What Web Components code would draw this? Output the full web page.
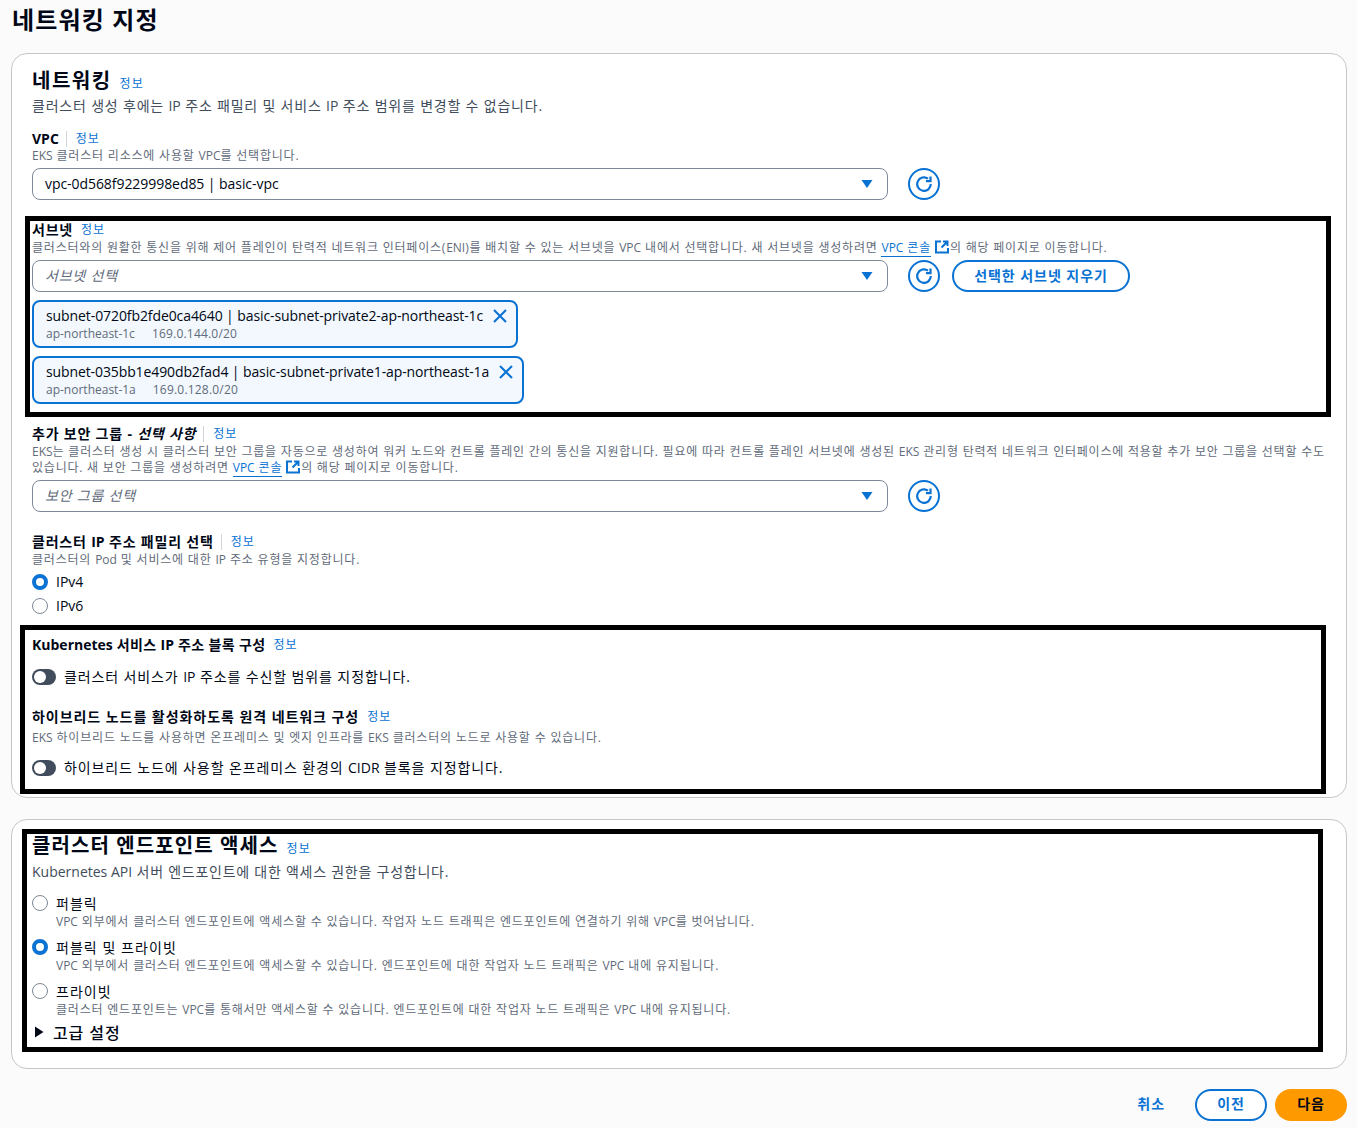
<!DOCTYPE html>
<html lang="ko"><head><meta charset="utf-8"><title>네트워킹 지정</title>
<style>
html,body{margin:0;padding:0;background:#fbfbfc}
body{font:14px/20px "Open Sans","Noto Sans CJK KR",sans-serif;color:#000716;letter-spacing:.8px}
</style></head><body>
<page-shell>
  <page-title>네트워킹 지정</page-title>
  <aws-card style="margin-top:19px;--pt:12px;--pb:19px">
    <card-head style="letter-spacing:1.5px">네트워킹</card-head>
    <aws-text style="margin-top:1px">클러스터 생성 후에는 IP 주소 패밀리 및 서비스 IP 주소 범위를 변경할 수 없습니다.</aws-text>

    <aws-label divider style="margin-top:13px">VPC</aws-label>
    <aws-desc style="margin-top:-1px">EKS 클러스터 리소스에 사용할 VPC를 선택합니다.</aws-desc>
    <select-row style="margin-top:5px"><aws-select>vpc-0d568f9229998ed85 | basic-vpc</aws-select><refresh-btn></refresh-btn></select-row>

    <aws-label style="margin-top:19px">서브넷</aws-label>
    <aws-desc style="letter-spacing:.79px">클러스터와의 원활한 통신을 위해 제어 플레인이 탄력적 네트워크 인터페이스(ENI)를 배치할 수 있는 서브넷을 VPC 내에서 선택합니다. 새 서브넷을 생성하려면 <ext-link>VPC 콘솔</ext-link>의 해당 페이지로 이동합니다.</aws-desc>
    <select-row style="margin-top:5px"><aws-select placeholder>서브넷 선택</aws-select><refresh-btn></refresh-btn><pill-btn style="margin-left:12px;width:178px">선택한 서브넷 지우기</pill-btn></select-row>
    <subnet-token style="margin-top:8px" az="ap-northeast-1c" cidr="169.0.144.0/20">subnet-0720fb2fde0ca4640 | basic-subnet-private2-ap-northeast-1c</subnet-token>
    <subnet-token style="margin-top:8px;--lr:-.11px" az="ap-northeast-1a" cidr="169.0.128.0/20">subnet-035bb1e490db2fad4 | basic-subnet-private1-ap-northeast-1a</subnet-token>

    <aws-label divider style="margin-top:19px">추가 보안 그룹 - <i>선택 사항</i></aws-label>
    <aws-desc style="letter-spacing:.78px">EKS는 클러스터 생성 시 클러스터 보안 그룹을 자동으로 생성하여 워커 노드와 컨트롤 플레인 간의 통신을 지원합니다. 필요에 따라 컨트롤 플레인 서브넷에 생성된 EKS 관리형 탄력적 네트워크 인터페이스에 적용할 추가 보안 그룹을 선택할 수도 있습니다. 새 보안 그룹을 생성하려면 <ext-link>VPC 콘솔</ext-link>의 해당 페이지로 이동합니다.</aws-desc>
    <select-row style="margin-top:5px"><aws-select placeholder>보안 그룹 선택</aws-select><refresh-btn></refresh-btn></select-row>

    <aws-label divider style="margin-top:19px">클러스터 IP 주소 패밀리 선택</aws-label>
    <aws-desc>클러스터의 Pod 및 서비스에 대한 IP 주소 유형을 지정합니다.</aws-desc>
    <aws-radio checked style="margin-top:3px;height:24px;--top:4px;--c:2px">IPv4</aws-radio>
    <aws-radio style="height:24px;--top:4px;--c:2px">IPv6</aws-radio>

    <aws-label style="margin-top:16px;letter-spacing:.36px">Kubernetes 서비스 IP 주소 블록 구성</aws-label>
    <aws-toggle style="margin-top:13px">클러스터 서비스가 IP 주소를 수신할 범위를 지정합니다.</aws-toggle>
    <aws-label style="margin-top:19px;letter-spacing:.95px">하이브리드 노드를 활성화하도록 원격 네트워크 구성</aws-label>
    <aws-desc style="margin-top:3px">EKS 하이브리드 노드를 사용하면 온프레미스 및 엣지 인프라를 EKS 클러스터의 노드로 사용할 수 있습니다.</aws-desc>
    <aws-toggle style="margin-top:13px">하이브리드 노드에 사용할 온프레미스 환경의 CIDR 블록을 지정합니다.</aws-toggle>

    <annot-box style="left:13px;top:162px;width:1306px;height:201px"></annot-box>
    <annot-box style="left:8px;top:571px;width:1306px;height:169px"></annot-box>
  </aws-card>

  <aws-card style="margin-top:21px;--pt:11px;--pb:26px">
    <card-head>클러스터 엔드포인트 액세스</card-head>
    <aws-text style="margin-top:2px;letter-spacing:.75px">Kubernetes API 서버 엔드포인트에 대한 액세스 권한을 구성합니다.</aws-text>
    <aws-radio style="margin-top:12px">퍼블릭<span slot="desc">VPC 외부에서 클러스터 엔드포인트에 액세스할 수 있습니다. 작업자 노드 트래픽은 엔드포인트에 연결하기 위해 VPC를 벗어납니다.</span></aws-radio>
    <aws-radio checked style="margin-top:8px">퍼블릭 및 프라이빗<span slot="desc">VPC 외부에서 클러스터 엔드포인트에 액세스할 수 있습니다. 엔드포인트에 대한 작업자 노드 트래픽은 VPC 내에 유지됩니다.</span></aws-radio>
    <aws-radio style="margin-top:8px">프라이빗<span slot="desc">클러스터 엔드포인트는 VPC를 통해서만 액세스할 수 있습니다. 엔드포인트에 대한 작업자 노드 트래픽은 VPC 내에 유지됩니다.</span></aws-radio>
    <aws-expander style="margin-top:5px">고급 설정</aws-expander>
    <annot-box style="left:10px;top:9px;width:1301px;height:223px"></annot-box>
  </aws-card>

  <wizard-footer></wizard-footer>
</page-shell>
<script>
const BLUE='#0972d3';
function def(name,html){
  customElements.define(name,class extends HTMLElement{
    constructor(){super();this.attachShadow({mode:'open'});if(typeof html!=='function')this.shadowRoot.innerHTML=html;}
    connectedCallback(){ if(typeof html==='function'&&!this._r){this._r=1;this.shadowRoot.innerHTML=html(this);} }
  });
}
def('l-r',`<style>:host{display:inline;letter-spacing:var(--lr,0)}</style><slot></slot>`);
def('page-shell',`<style>:host{display:block;padding:6px 10px 0 11px}</style><slot></slot>`);
def('page-title',`<style>:host{display:block;font-size:24px;line-height:28px;font-weight:700;margin-left:1px;color:#000716;letter-spacing:1.15px}</style><slot></slot>`);
def('aws-card',`<style>:host{display:block;position:relative;background:#fff;border:1px solid #c6c6cd;border-radius:16px;padding:var(--pt) 20px var(--pb)}</style><slot></slot>`);
def('info-link',`<style>:host{display:inline-block;font-size:12px;line-height:16px;font-weight:400;font-style:normal;color:${BLUE};letter-spacing:1px}</style><slot></slot>`);
def('card-head',`<style>:host{display:flex;align-items:center;box-sizing:border-box;height:28px;padding-top:2px;font-size:20px;font-weight:700;line-height:28px;letter-spacing:1.1px}
 info-link{margin:5px 0 0 8px}</style><span><slot></slot></span><info-link>정보</info-link>`);
def('aws-text',`<style>:host{display:block;color:#414d5c;line-height:20px;padding-top:1px;margin-bottom:-1px}</style><slot></slot>`);
def('aws-label',h=>`<style>:host{display:flex;align-items:center;box-sizing:border-box;height:20px;padding-top:2px;font-weight:700;font-size:14px;line-height:20px}
 .d{width:1px;height:16px;background:#d1d5db;margin:0 9px 0 7px}
 info-link{margin-left:${h.hasAttribute('divider')?'0':'8px'}}</style><span><slot></slot></span>${h.hasAttribute('divider')?'<span class="d"></span>':''}<info-link>정보</info-link>`);
def('aws-desc',`<style>:host{display:block;font-size:12px;line-height:16px;color:#5f6b7a;letter-spacing:.8px;word-break:keep-all;padding-top:1px;margin-bottom:-1px}</style><slot></slot>`);
def('ext-link',`<style>:host{display:inline;color:${BLUE}}
 span{border-bottom:1px solid ${BLUE};padding-bottom:0}
 svg{width:14px;height:14px;vertical-align:-2px;margin:0 1px 0 0}</style><span><slot></slot></span> <svg viewBox="0 0 14 14" fill="none" stroke="${BLUE}" stroke-width="2"><path d="M6 1.5H1v11h12V8"/><path d="M8 1.5h4.5V6M12.5 1.5L6.5 7.5"/></svg>`);
def('select-row',`<style>:host{display:flex;align-items:center;height:32px}</style><slot></slot>`);
def('aws-select',h=>`<style>:host{display:flex;align-items:center;box-sizing:border-box;width:856px;height:32px;border:1px solid #7d8998;border-radius:8px;padding:0 13px 0 12px;background:#fff;--lr:-.06px;
 ${h.hasAttribute('placeholder')?'color:#5f6b7a;font-style:italic':'color:#000716'}}
 span{flex:1} svg{width:14px;height:10px}</style><span><slot></slot></span><svg viewBox="0 0 14 10"><path d="M1.5 1h11L7 9z" fill="${BLUE}"/></svg>`);
def('refresh-btn',`<style>:host{display:flex;align-items:center;justify-content:center;box-sizing:border-box;width:32px;height:32px;border:2px solid ${BLUE};border-radius:50%;margin-left:20px;background:#fff}
 svg{width:16px;height:16px}</style><svg viewBox="0 0 16 16" fill="none" stroke="${BLUE}" stroke-width="2.2"><path d="M14.8 8A6.8 6.8 0 1 1 12 2.6"/><path d="M14.5 0.6v4.6h-4.6"/></svg>`);
def('pill-btn',`<style>:host{display:flex;align-items:center;justify-content:center;box-sizing:border-box;height:32px;border:2px solid ${BLUE};border-radius:16px;color:${BLUE};font-weight:700;background:#fff;letter-spacing:.95px}</style><slot></slot>`);
def('subnet-token',h=>`<style>:host{display:flex;box-sizing:border-box;width:fit-content;height:48px;border:2px solid ${BLUE};border-radius:8px;background:#f2f8fd;padding:4px 8px 0 12px;--lr:-.09px}
 .m{line-height:20px;color:#000716}.s{font-size:12px;line-height:16px;color:#5f6b7a;display:flex;gap:17px;letter-spacing:0}
 .s span+span{letter-spacing:.2px}
 svg{width:16px;height:16px;margin:2px 0 0 9px;flex:none}</style>
 <div><div class="m"><slot></slot></div><div class="s"><span>${h.getAttribute('az')||''}</span><span>${h.getAttribute('cidr')||''}</span></div></div>
 <svg viewBox="0 0 16 16" fill="none" stroke="${BLUE}" stroke-width="2"><path d="M2 2l12 12M14 2L2 14"/></svg>`);
def('aws-radio',h=>{const c=h.hasAttribute('checked');return `<style>:host{display:flex;position:relative;padding-left:24px;color:#000716;letter-spacing:1.05px}
 .r{position:absolute;left:0;top:var(--top,2px);box-sizing:border-box;width:16px;height:16px;border-radius:50%;background:#fff;${c?`border:4.5px solid ${BLUE}`:'border:1px solid #7d8998'}}
 .c{padding-top:var(--c,1px);margin-bottom:-1px} .d{display:block;font-size:12px;line-height:16px;color:#5f6b7a;letter-spacing:.8px}</style>
 <span class="r"></span><div class="c"><div><slot></slot></div><div class="d"><slot name="desc"></slot></div></div>`});
def('aws-toggle',`<style>:host{display:flex;align-items:center;height:20px;color:#000716;letter-spacing:.88px}
 .t{position:relative;width:24px;height:16px;border-radius:8px;background:#414d5c;margin-right:8px;flex:none}
 .t::after{content:"";position:absolute;left:2px;top:2px;width:12px;height:12px;border-radius:50%;background:#fff}</style><span class="t"></span><span><slot></slot></span>`);
def('aws-expander',`<style>:host{display:flex;align-items:center;height:20px;font-size:16px;font-weight:500;color:#000716;letter-spacing:.9px}
 svg{width:10px;height:12px;margin:0 9px 0 2px}
 span{padding-top:2px}</style><svg viewBox="0 0 10 12"><path d="M1 .5L9.5 6L1 11.5z" fill="#000716"/></svg><span><slot></slot></span>`);
def('annot-box',`<style>:host{display:block;position:absolute;box-sizing:border-box;border:5px solid #000;pointer-events:none}</style>`);
def('wizard-footer',`<style>:host{display:flex;justify-content:flex-end;align-items:center;height:32px;margin-top:20px;font-weight:700;letter-spacing:.95px}
 .l{color:${BLUE};margin-right:30px;padding-bottom:2px}
 .p{box-sizing:border-box;width:72px;height:32px;border-radius:16px;display:flex;align-items:center;justify-content:center;padding-bottom:2px}
 .o{border:2px solid ${BLUE};color:${BLUE};background:#fff;margin-right:8px}
 .n{background:#f90;color:#000716}</style><span class="l">취소</span><span class="p o">이전</span><span class="p n">다음</span>`);
// Latin runs keep natural spacing; only Hangul is tracked out
const w=document.createTreeWalker(document.querySelector('page-shell'),NodeFilter.SHOW_TEXT);
const nodes=[];while(w.nextNode())nodes.push(w.currentNode);
const re=/[A-Za-z0-9][A-Za-z0-9.\-\/ |]*[A-Za-z0-9]|[A-Za-z0-9]/g;
for(const n of nodes){
  if(!/[A-Za-z0-9]/.test(n.data))continue;
  const f=document.createDocumentFragment();let i=0,m;
  re.lastIndex=0;
  while((m=re.exec(n.data))){
    if(m.index>i)f.append(n.data.slice(i,m.index));
    const s=document.createElement('l-r');s.textContent=m[0];f.append(s);i=m.index+m[0].length;
  }
  if(i<n.data.length)f.append(n.data.slice(i));
  n.replaceWith(f);
}
</script>
</body></html>
